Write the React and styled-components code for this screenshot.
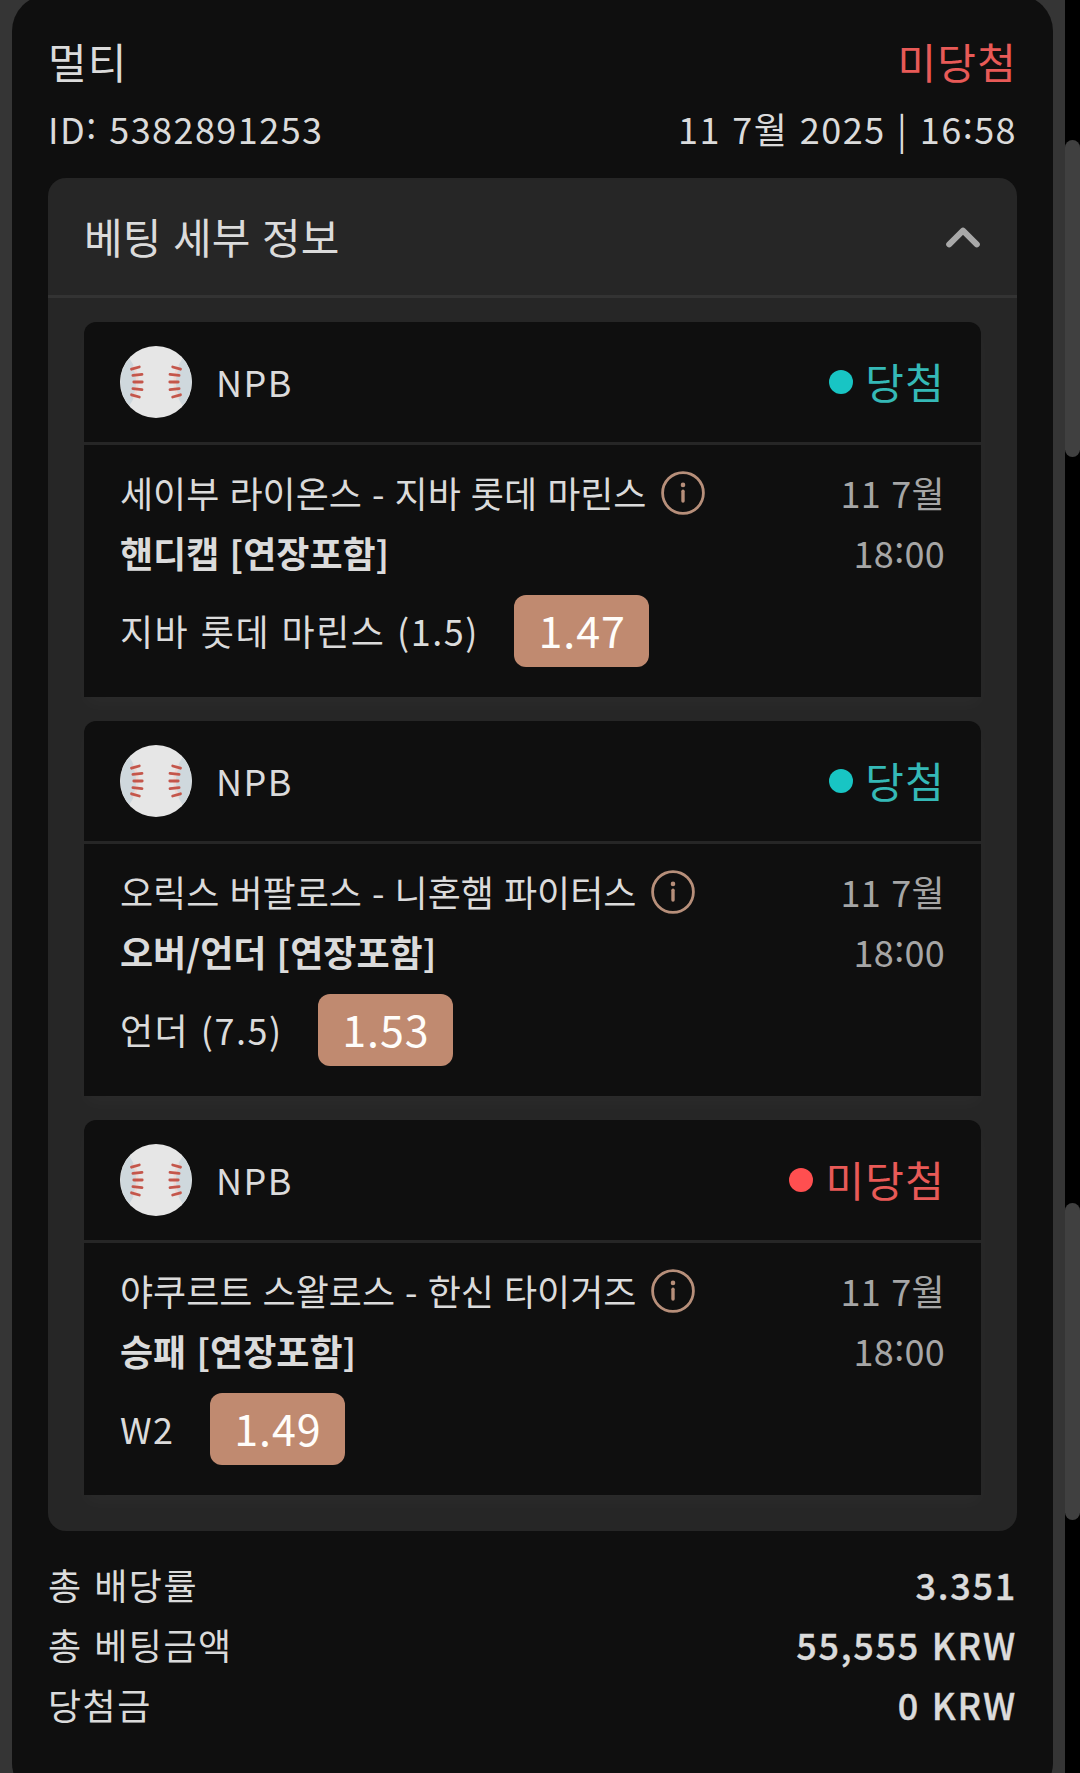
import React from "react";
import styled, { createGlobalStyle } from "styled-components";

const GlobalStyle = createGlobalStyle`
  * { box-sizing: border-box; }
  html, body { margin: 0; padding: 0; background: #000; overflow: hidden; }
  body {
    font-family: "Noto Sans CJK KR", "Noto Sans", sans-serif;
    font-size: 36px;
    line-height: 60px;
    letter-spacing: 1.5px;
    word-spacing: 2px;
    color: #dbdbdb;
  }
`;

const Page = styled.div`
  display: flex;
  width: 1080px;
  height: 1773px;
  overflow: hidden;
`;

const Content = styled.main`
  width: 1065px;
  height: 1773px;
  padding: 0 12px;
  background: #353535;
  overflow: hidden;
`;

const ScrollTrack = styled.aside`
  width: 15px;
  padding-top: 140px;
  display: flex;
  flex-direction: column;
  gap: 746px;
  background: #000;
`;

const ScrollThumb = styled.div`
  flex: none;
  width: 15px;
  height: 317px;
  border-radius: 8px;
  background: #404040;
`;

const Ticket = styled.section`
  height: 1804px;
  margin-top: -5px;
  padding: 29px 36px 0;
  border-radius: 36px;
  background: #0f0f0f;
`;

const Row = styled.div`
  display: flex;
  justify-content: space-between;
  align-items: center;
  height: ${(p) => p.$height || 60}px;
`;

const Meta = styled.span`
  letter-spacing: 1.45px;
`;

const Title = styled.span`
  font-size: 42px;
  letter-spacing: 1.2px;
  color: ${(p) => p.$color || "#dbdbdb"};
`;

const Panel = styled.div`
  height: 1353px;
  margin-top: 20px;
  border-radius: 18px;
  background: #262626;
`;

const PanelHeader = styled.header`
  display: flex;
  justify-content: space-between;
  align-items: center;
  height: 120px;
  padding: 0 36px;
  border-bottom: 3px solid #333;
`;

const PanelTitle = styled(Title)`
  padding-bottom: 2px;
  letter-spacing: 0.1px;
`;

const BetList = styled.div`
  display: flex;
  flex-direction: column;
  gap: 24px;
  padding: 24px 36px 36px;
`;

const BetCard = styled.article`
  height: 375px;
  border-radius: 12px 12px 0 0;
  background: #0f0f0f;
  box-shadow: 0 9px 18px rgba(255, 255, 255, 0.025);
`;

const BetHeader = styled.header`
  display: flex;
  align-items: center;
  height: 123px;
  padding: 0 36px;
  border-bottom: 3px solid #262626;
`;

const League = styled.span`
  flex: 1;
  padding: 0 0 2px 24px;
`;

const Status = styled.span`
  display: flex;
  align-items: center;
  gap: 12.7px;
  font-size: 42px;
  letter-spacing: 1.2px;
  color: ${(p) => (p.$won ? "#35b9b7" : "#e85a57")};
`;

const StatusText = styled.span`
  padding-bottom: 3px;
`;

const Dot = styled.span`
  width: 24px;
  height: 24px;
  border-radius: 50%;
  background: ${(p) => (p.$won ? "#18c5c4" : "#ff4f50")};
`;

const BetBody = styled.div`
  padding: 17px 36px 30px;
`;

const BetInfo = styled.div`
  display: flex;
  justify-content: space-between;
  letter-spacing: 0;
`;

const Match = styled.div`
  display: flex;
  align-items: center;
  gap: 12.5px;
  height: 60px;
`;

const Market = styled.div`
  font-weight: 700;
`;

const When = styled.div`
  text-align: right;
  letter-spacing: 0.3px;
  color: #a6a6a6;
`;

const Colon = styled.span`
  line-height: 0;
  vertical-align: 5px;
`;

const Pick = styled.div`
  display: flex;
  align-items: center;
  gap: 35px;
  margin-top: 13px;
`;

const PickName = styled.span`
  padding-bottom: 2px;
`;

const Odds = styled.span`
  width: 135px;
  height: 72px;
  padding-left: 1.5px;
  border-radius: 12px;
  background: #c08a70;
  color: #fffdfa;
  font-size: 43px;
  line-height: 68px;
  letter-spacing: 0.9px;
  text-align: center;
`;

const Totals = styled.footer`
  padding-top: 23px;
`;

const Amount = styled.span`
  font-weight: 500;
  letter-spacing: 1.75px;
  -webkit-text-stroke: 0.4px currentColor;
`;

const Icon = styled.svg`
  flex: none;
  display: block;
`;

const InfoGlyph = styled(Icon)`
  margin-top: 2px;
`;

function Baseball() {
  const stitches =
    "M11.5 23.2 19.3 21M12.9 29.4 22 28.4M13.8 36H22.2M12.9 42.6 22 43.6M11.5 48.8 19.3 51";
  const half = (
    <>
      <path d="M9.3 12.3A36 36 0 0 0 9.3 59.7 40 40 0 0 0 9.3 12.3Z" fill="#cfd8dd" />
      <path d="M13.6 20A37 37 0 0 1 13.6 52" fill="none" stroke="#f0d9d5" strokeWidth="2.4" />
      <path d={stitches} stroke="#c4564b" strokeWidth="2.8" strokeLinecap="round" fill="none" />
    </>
  );
  return (
    <Icon width="72" height="72" viewBox="0 0 72 72">
      <circle cx="36" cy="36" r="36" fill="#e6e6e6" />
      {half}
      <g transform="translate(72 0) scale(-1 1)">{half}</g>
    </Icon>
  );
}

function InfoIcon() {
  return (
    <InfoGlyph width="48" height="48" viewBox="0 0 48 48">
      <circle cx="24" cy="24" r="20.4" fill="none" stroke="#b78f7a" strokeWidth="2.8" />
      <circle cx="24" cy="15.9" r="2.3" fill="#b78f7a" />
      <path d="M24 22.2V32" stroke="#b78f7a" strokeWidth="3.4" strokeLinecap="round" />
    </InfoGlyph>
  );
}

function ChevronUp() {
  return (
    <Icon width="36" height="36" viewBox="0 0 36 36">
      <path
        d="M4.2 25.4 18 11.6 31.8 25.4"
        fill="none"
        stroke="#a8a8a8"
        strokeWidth="6"
        strokeLinecap="round"
        strokeLinejoin="round"
      />
    </Icon>
  );
}

const bets = [
  {
    match: "세이부 라이온스 - 지바 롯데 마린스",
    market: "핸디캡 [연장포함]",
    pick: "지바 롯데 마린스 (1.5)",
    odds: "1.47",
    won: true,
  },
  {
    match: "오릭스 버팔로스 - 니혼햄 파이터스",
    market: "오버/언더 [연장포함]",
    pick: "언더 (7.5)",
    odds: "1.53",
    won: true,
  },
  {
    match: "야쿠르트 스왈로스 - 한신 타이거즈",
    market: "승패 [연장포함]",
    pick: "W2",
    odds: "1.49",
    won: false,
  },
];

const totals = [
  ["총 배당률", "3.351"],
  ["총 베팅금액", "55,555 KRW"],
  ["당첨금", "0 KRW"],
];

function Bet({ bet }) {
  return (
    <BetCard>
      <BetHeader>
        <Baseball />
        <League>NPB</League>
        <Status $won={bet.won}>
          <Dot $won={bet.won} />
          <StatusText>{bet.won ? "당첨" : "미당첨"}</StatusText>
        </Status>
      </BetHeader>
      <BetBody>
        <BetInfo>
          <div>
            <Match>
              <span>{bet.match}</span>
              <InfoIcon />
            </Match>
            <Market>{bet.market}</Market>
          </div>
          <When>
            <div>11 7월</div>
            <div>
              18<Colon>:</Colon>00
            </div>
          </When>
        </BetInfo>
        <Pick>
          <PickName>{bet.pick}</PickName>
          <Odds>{bet.odds}</Odds>
        </Pick>
      </BetBody>
    </BetCard>
  );
}

export default function App() {
  return (
    <Page>
      <GlobalStyle />
      <Content>
        <Ticket>
          <Row $height={73}>
            <Title>멀티</Title>
            <Title $color="#e85a57">미당첨</Title>
          </Row>
          <Row $height={61}>
            <Meta>
              ID<Colon>:</Colon> 5382891253
            </Meta>
            <Meta>
              11 7월 2025 | 16<Colon>:</Colon>58
            </Meta>
          </Row>
          <Panel>
            <PanelHeader>
              <PanelTitle>베팅 세부 정보</PanelTitle>
              <ChevronUp />
            </PanelHeader>
            <BetList>
              {bets.map((bet) => (
                <Bet key={bet.match} bet={bet} />
              ))}
            </BetList>
          </Panel>
          <Totals>
            {totals.map(([label, value]) => (
              <Row key={label}>
                <span>{label}</span>
                <Amount>{value}</Amount>
              </Row>
            ))}
          </Totals>
        </Ticket>
      </Content>
      <ScrollTrack>
        <ScrollThumb />
        <ScrollThumb />
      </ScrollTrack>
    </Page>
  );
}
